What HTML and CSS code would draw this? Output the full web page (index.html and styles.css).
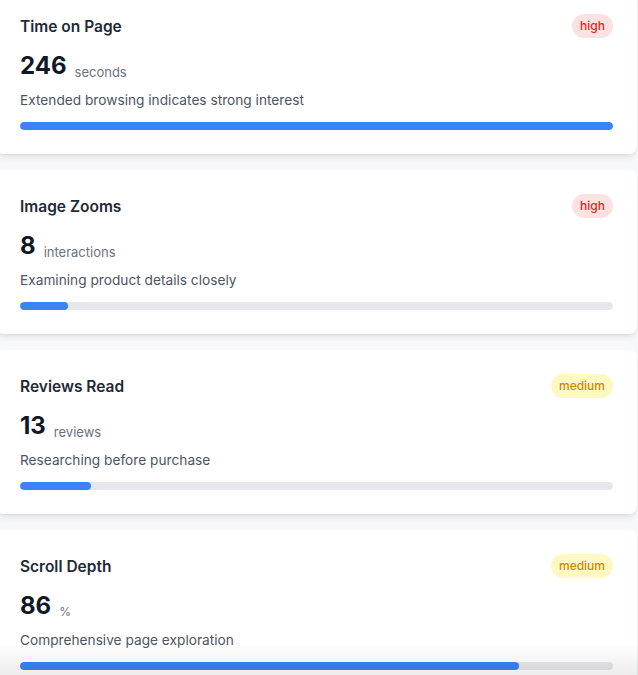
FILE: index.html
```html
<!DOCTYPE html>
<html lang="en">
<head>
<meta charset="utf-8">
<title>Engagement signals</title>
<link rel="stylesheet" href="styles.css">
</head>
<body>
<div class="list">
  <div class="card">
    <div class="head"><span class="title">Time on Page</span><span class="badge high">high</span></div>
    <div class="value"><span class="num">246</span><span class="unit">seconds</span></div>
    <div class="desc">Extended browsing indicates strong interest</div>
    <div class="track"><div class="fill" style="width:100%"></div></div>
  </div>
  <div class="card">
    <div class="head"><span class="title">Image Zooms</span><span class="badge high">high</span></div>
    <div class="value"><span class="num">8</span><span class="unit">interactions</span></div>
    <div class="desc">Examining product details closely</div>
    <div class="track"><div class="fill" style="width:8.1%"></div></div>
  </div>
  <div class="card">
    <div class="head"><span class="title">Reviews Read</span><span class="badge medium">medium</span></div>
    <div class="value"><span class="num">13</span><span class="unit">reviews</span></div>
    <div class="desc">Researching before purchase</div>
    <div class="track"><div class="fill" style="width:12%"></div></div>
  </div>
  <div class="card">
    <div class="head"><span class="title">Scroll Depth</span><span class="badge medium">medium</span></div>
    <div class="value"><span class="num">86</span><span class="unit small">%</span></div>
    <div class="desc">Comprehensive page exploration</div>
    <div class="track"><div class="fill" style="width:84.1%"></div></div>
  </div>
</div>
<div class="bottom-shade"></div>
</body>
</html>
```

FILE: styles.css
```css
html, body {
  margin: 0;
  padding: 0;
  background: #f6f8fa;
  font-family: Inter, "Noto Sans", "Liberation Sans", sans-serif;
  overflow: hidden;
}
.list {
  display: flex;
  flex-direction: column;
  gap: 16px;
  margin: -10px 0 0 -4px;
  width: 641px;
}
.card {
  background: #ffffff;
  border-radius: 8px;
  padding: 24px;
  box-shadow: 0 4px 6px -1px rgba(0, 0, 0, 0.08), 0 2px 4px -2px rgba(0, 0, 0, 0.08);
  display: flex;
  flex-direction: column;
}
.head {
  display: flex;
  justify-content: space-between;
  align-items: center;
  height: 24px;
}
.title {
  font-size: 15.5px;
  font-weight: 600;
  color: #1f2937;
}
.badge {
  height: 24px;
  line-height: 24px;
  padding: 0 8px;
  border-radius: 12px;
  font-size: 12px;
  font-weight: 500;
}
.badge.high {
  background: #fee2e2;
  color: #dc2626;
}
.badge.medium {
  background: #fef9c3;
  color: #ca8a04;
}
.value {
  margin-top: 12px;
  height: 32px;
  display: flex;
  align-items: flex-end;
  gap: 8px;
}
.num {
  font-size: 24px;
  line-height: 32px;
  font-weight: 700;
  color: #111827;
}
.unit {
  font-size: 13px;
  line-height: 20px;
  color: #6b7280;
}
.unit.small {
  font-size: 12px;
}
.desc {
  margin-top: 8px;
  font-size: 13.7px;
  line-height: 20px;
  color: #4b5563;
}
.track {
  margin-top: 12px;
  height: 8px;
  border-radius: 4px;
  background: #e5e7eb;
  overflow: hidden;
}
.fill {
  height: 100%;
  border-radius: 4px;
  background: #3b82f6;
}
.bottom-shade {
  position: fixed;
  left: 0;
  right: 0;
  bottom: 0;
  height: 32px;
  background: linear-gradient(to bottom, rgba(0, 0, 0, 0), rgba(0, 0, 0, 0.07));
  pointer-events: none;
}
```
